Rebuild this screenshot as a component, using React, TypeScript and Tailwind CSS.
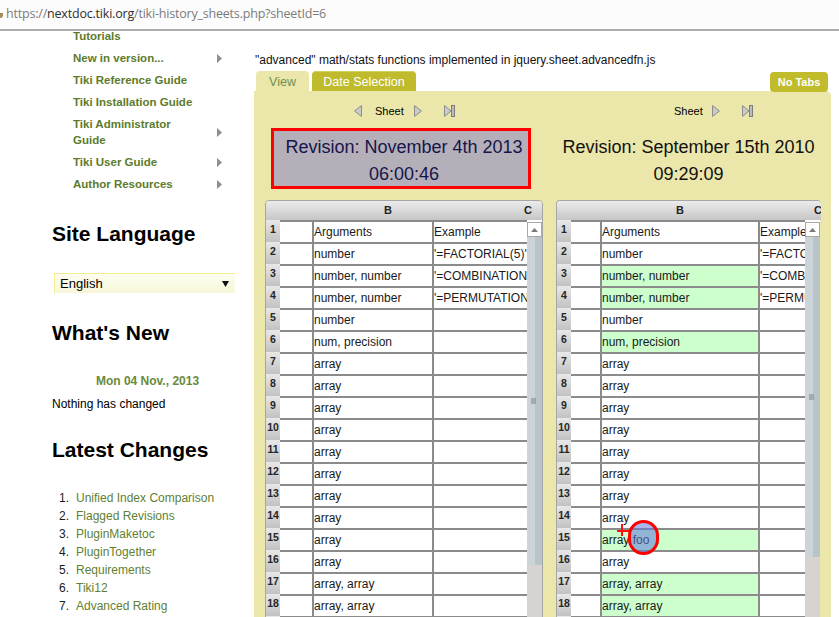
import React from "react";

const navItems: { label: string; arrow: boolean }[] = [
  { label: "Tutorials", arrow: false },
  { label: "New in version...", arrow: true },
  { label: "Tiki Reference Guide", arrow: false },
  { label: "Tiki Installation Guide", arrow: false },
  { label: "Tiki Administrator Guide", arrow: true },
  { label: "Tiki User Guide", arrow: true },
  { label: "Author Resources", arrow: true },
];

const latest = [
  "Unified Index Comparison",
  "Flagged Revisions",
  "PluginMaketoc",
  "PluginTogether",
  "Requirements",
  "Tiki12",
  "Advanced Rating",
];

const colBText = [
  "Arguments",
  "number",
  "number, number",
  "number, number",
  "number",
  "num, precision",
  "array",
  "array",
  "array",
  "array",
  "array",
  "array",
  "array",
  "array",
  "array",
  "array",
  "array, array",
  "array, array",
  "array",
];

const colCText = [
  "Example",
  "'=FACTORIAL(5)'",
  "'=COMBINATION(5, 2)'",
  "'=PERMUTATION(5, 2)'",
];

function NavArrow() {
  return (
    <svg width="5" height="9" viewBox="0 0 5 9" className="shrink-0">
      <polygon points="0,0 5,4.5 0,9" fill="#8e8e8e" />
    </svg>
  );
}

function ArrowLeft({ className }: { className?: string }) {
  return (
    <svg width="8" height="12" viewBox="0 0 8 12" className={className}>
      <polygon points="7.5,0.5 7.5,11.5 0.6,6" fill="#cacaca" stroke="#8c8c8c" />
    </svg>
  );
}

function ArrowRight({ className }: { className?: string }) {
  return (
    <svg width="8" height="12" viewBox="0 0 8 12" className={className}>
      <polygon points="0.5,0.5 0.5,11.5 7.4,6" fill="#cacaca" stroke="#8c8c8c" />
    </svg>
  );
}

function ArrowEnd({ className }: { className?: string }) {
  return (
    <svg width="11" height="12" viewBox="0 0 11 12" className={className}>
      <polygon points="0.5,0.5 0.5,11.5 7,6" fill="#cacaca" stroke="#8c8c8c" />
      <rect x="7.5" y="0.5" width="3" height="11" fill="#bdbdbd" stroke="#7c7c7c" />
    </svg>
  );
}

function Scrollbar({ thumb }: { thumb: string }) {
  return (
    <div className="w-[15px] shrink-0 flex flex-col">
      <div className="h-[2px] bg-white" />
      <div className="h-[15px] bg-white border border-[#a8a8a8] flex items-center justify-center">
        <svg width="7" height="4" viewBox="0 0 7 4">
          <polygon points="0,4 3.5,0 7,4" fill="#7a7a7a" />
        </svg>
      </div>
      <div className={`${thumb} flex relative`}>
        <div className="w-[8px] bg-[#cbd4d8]" />
        <div className="flex-1 bg-[#b9c4c8]" />
        <div className="absolute left-[4px] top-1/2 -translate-y-1/2 flex flex-col gap-[1px]">
          <div className="w-[5px] h-[1px] bg-[#7d8589]" />
          <div className="w-[5px] h-[1px] bg-[#7d8589]" />
          <div className="w-[5px] h-[1px] bg-[#7d8589]" />
        </div>
      </div>
      <div className="h-[200px] bg-[#d7d3d0]" />
    </div>
  );
}

type SheetProps = {
  width: string;
  border: string;
  colA: string;
  colB: string;
  gridW: string;
  bOffset: string;
  cOffset: string;
  thumb: string;
  highlight: number[];
  foo?: boolean;
};

function Sheet(p: SheetProps) {
  return (
    <div className={`${p.width} ${p.border} border-[#a6a6a6] rounded-t-[4px] overflow-hidden`}>
      <div className="h-[19px] bg-gradient-to-b from-[#ececec] to-[#c6c6c6] flex items-center whitespace-nowrap text-[11px] font-bold text-[#222]">
        <div className={`${p.bOffset} w-[40px] shrink-0 text-center`}>B</div>
        <div className={`${p.cOffset} w-[40px] shrink-0 text-center`}>C</div>
      </div>
      <div className="flex items-start">
        <div className={`${p.gridW} shrink-0 overflow-hidden`}>
          {colBText.map((b, i) => {
            const hl = p.highlight.includes(i + 1);
            const isFoo = p.foo && i === 14;
            return (
              <div key={i} className="flex h-[22px]">
                <div className="w-[14px] shrink-0 bg-gradient-to-b from-[#e8e8e8] to-[#c2c2c2] text-center text-[10.5px] font-bold leading-[16px] pt-[1px] text-[#262626]">
                  {i + 1}
                </div>
                <div className={`${p.colA} shrink-0 border-t-2 border-r-2 border-[#8b8b8b] bg-white`} />
                <div
                  className={`${p.colB} shrink-0 border-t-2 border-r-2 border-[#8b8b8b] ${
                    hl ? "bg-[#ccffcc]" : "bg-white"
                  } relative text-[12px] leading-[20px] whitespace-nowrap text-[#1a1a1a]`}
                >
                  {isFoo ? "array foo" : b}
                  {isFoo && (
                    <>
                      <div className="absolute left-[15px] top-[0px] w-[13px] h-[2px] bg-[#ff1010] z-10" />
                      <div className="absolute left-[19px] top-[-6px] w-[2px] h-[12px] bg-[#ff1010] z-10" />
                      <div className="absolute left-[26px] top-[-10px] w-[31px] h-[35px] rounded-full border-[3px] border-[#ff0000] bg-[rgba(100,120,220,0.55)] z-10" />
                    </>
                  )}
                </div>
                <div className="flex-1 min-w-0 border-t-2 border-[#8b8b8b] bg-white text-[12px] leading-[20px] whitespace-nowrap overflow-hidden text-[#1a1a1a]">
                  {colCText[i] ?? ""}
                </div>
              </div>
            );
          })}
        </div>
        <Scrollbar thumb={p.thumb} />
      </div>
    </div>
  );
}

export default function App() {
  return (
    <div className="w-[839px] h-[617px] overflow-hidden bg-white font-['Liberation_Sans',Arial,sans-serif] text-black">
      {/* URL bar */}
      <div className="h-[31px] border-b-2 border-[#acacac] bg-[#fcfcfc] flex items-center relative">
        <div className="absolute left-0 top-[13px] w-[3px] h-[5px] bg-[#a58a5c] rounded-br-[3px]" />
        <div className="pl-[6px] font-['Open_Sans','Noto_Sans',sans-serif] text-[12.5px] tracking-[-0.2px] whitespace-nowrap">
          <span className="text-[#7b7b7b]">https://</span>
          <span className="text-[#2e2e2e]">nextdoc.tiki.org</span>
          <span className="text-[#7b7b7b]">/tiki-history_sheets.php?sheetId=6</span>
        </div>
      </div>

      <div className="flex h-[586px] overflow-hidden">
        {/* Sidebar */}
        <aside className="w-[254px] shrink-0 pl-[52px] overflow-hidden">
          <ul className="-mt-[6px] pl-[21px]">
            {navItems.map((n) => (
              <li key={n.label} className="flex items-center py-[3px]">
                <span className="w-[128px] shrink-0 text-[11.5px] leading-[16px] font-bold text-[#5d7b2c]">
                  {n.label}
                </span>
                {n.arrow && (
                  <span className="ml-[16px] flex">
                    <NavArrow />
                  </span>
                )}
              </li>
            ))}
          </ul>

          <h2 className="mt-[26px] text-[21px] leading-[26px] font-bold">Site Language</h2>

          <div className="mt-[26px] ml-[2px] w-[181px] h-[20px] border-l border-t border-[#efed8f] bg-gradient-to-b from-[#fefef2] to-[#f7f6d9] flex items-center justify-between pl-[5px] pr-[6px]">
            <span className="text-[13px] leading-[16px]">English</span>
            <svg width="7" height="6" viewBox="0 0 7 6">
              <polygon points="0,0 7,0 3.5,6" fill="#111" />
            </svg>
          </div>

          <h2 className="mt-[27px] text-[21px] leading-[26px] font-bold">What's New</h2>

          <div className="mt-[27px] w-[191px] text-center text-[12px] leading-[16px] font-bold text-[#6a8a3b]">
            Mon 04 Nov., 2013
          </div>
          <div className="mt-[7px] text-[12px] leading-[16px]">Nothing has changed</div>

          <h2 className="mt-[25px] text-[21px] leading-[26px] font-bold">Latest Changes</h2>

          <ol className="mt-[26px]">
            {latest.map((l, i) => (
              <li key={l} className="flex text-[12px] leading-[18px]">
                <span className="w-[17px] shrink-0 text-right text-[#1a1a1a]">{i + 1}.</span>
                <span className="ml-[7px] text-[#5f7f32]">{l}</span>
              </li>
            ))}
          </ol>
        </aside>

        {/* Main */}
        <main className="flex-1 min-w-0 pt-[21px] pr-[8px] flex flex-col">
          <p className="text-[12px] leading-[16px] pl-[1px] whitespace-nowrap text-[#111]">
            "advanced" math/stats functions implemented in jquery.sheet.advancedfn.js
          </p>
          <div className="mt-[3px] h-[20px] flex items-start shrink-0">
            <div className="ml-[2px] w-[53px] h-[20px] rounded-t-[4px] bg-[#ebe6a9] text-[#6f9052] text-[12.5px] leading-[22px] text-center">
              View
            </div>
            <div className="ml-[3px] w-[104px] h-[20px] rounded-t-[4px] bg-[#bfbb2c] border-t border-[#d2cf5a] text-white text-[12.5px] leading-[21px] text-center overflow-hidden">
              Date Selection
            </div>
            <div className="ml-auto mr-[3px] mt-[1px] w-[58px] h-[20px] rounded-[4px] bg-[#c0bc2b] text-white text-[11px] font-bold leading-[21px] text-center relative z-10">
              No Tabs
            </div>
          </div>

          <div className="flex-1 min-h-0 bg-[#ebe6a9] rounded-tr-[5px] pl-[11px] flex overflow-hidden">
            {/* left column */}
            <div className="w-[278px] shrink-0">
              <div className="mt-[10px] h-[20px] flex items-center pl-[89px]">
                <ArrowLeft />
                <span className="ml-[13px] text-[11px] leading-[14px]">Sheet</span>
                <ArrowRight className="ml-[10px]" />
                <ArrowEnd className="ml-[22px]" />
              </div>
              <div className="mt-[7px] ml-[6px] w-[260px] h-[61px] border-[3px] border-[#ff0000] bg-[#b4afb9] pt-[3px] pl-[6px] text-center text-[18px] leading-[27px] text-[#16164a] overflow-hidden">
                <div>Revision: November 4th 2013</div>
                <div>06:00:46</div>
              </div>
              <div className="mt-[11px]">
                <Sheet
                  width="w-[278px]"
                  border="border"
                  colA="w-[34px]"
                  colB="w-[120px]"
                  gridW="w-[261px]"
                  bOffset="ml-[102px]"
                  cOffset="ml-[100px]"
                  thumb="h-[328px]"
                  highlight={[]}
                />
              </div>
            </div>

            {/* right column */}
            <div className="ml-[13px] w-[265px] shrink-0 overflow-hidden">
              <div className="mt-[10px] h-[20px] flex items-center pl-[118px]">
                <span className="text-[11px] leading-[14px]">Sheet</span>
                <ArrowRight className="ml-[9px]" />
                <ArrowEnd className="ml-[22px]" />
              </div>
              <div className="mt-[7px] h-[61px] pt-[6px] text-center text-[18px] leading-[27px] text-[#111]">
                <div>Revision: September 15th 2010</div>
                <div>09:29:09</div>
              </div>
              <div className="mt-[11px]">
                <Sheet
                  width="w-[265px]"
                  border="border-l border-t"
                  colA="w-[31px]"
                  colB="w-[158px]"
                  gridW="w-[248px]"
                  bOffset="ml-[103px]"
                  cOffset="ml-[98px]"
                  thumb="h-[320px]"
                  highlight={[3, 4, 6, 15, 17, 18]}
                  foo
                />
              </div>
            </div>
          </div>
        </main>
      </div>
    </div>
  );
}
